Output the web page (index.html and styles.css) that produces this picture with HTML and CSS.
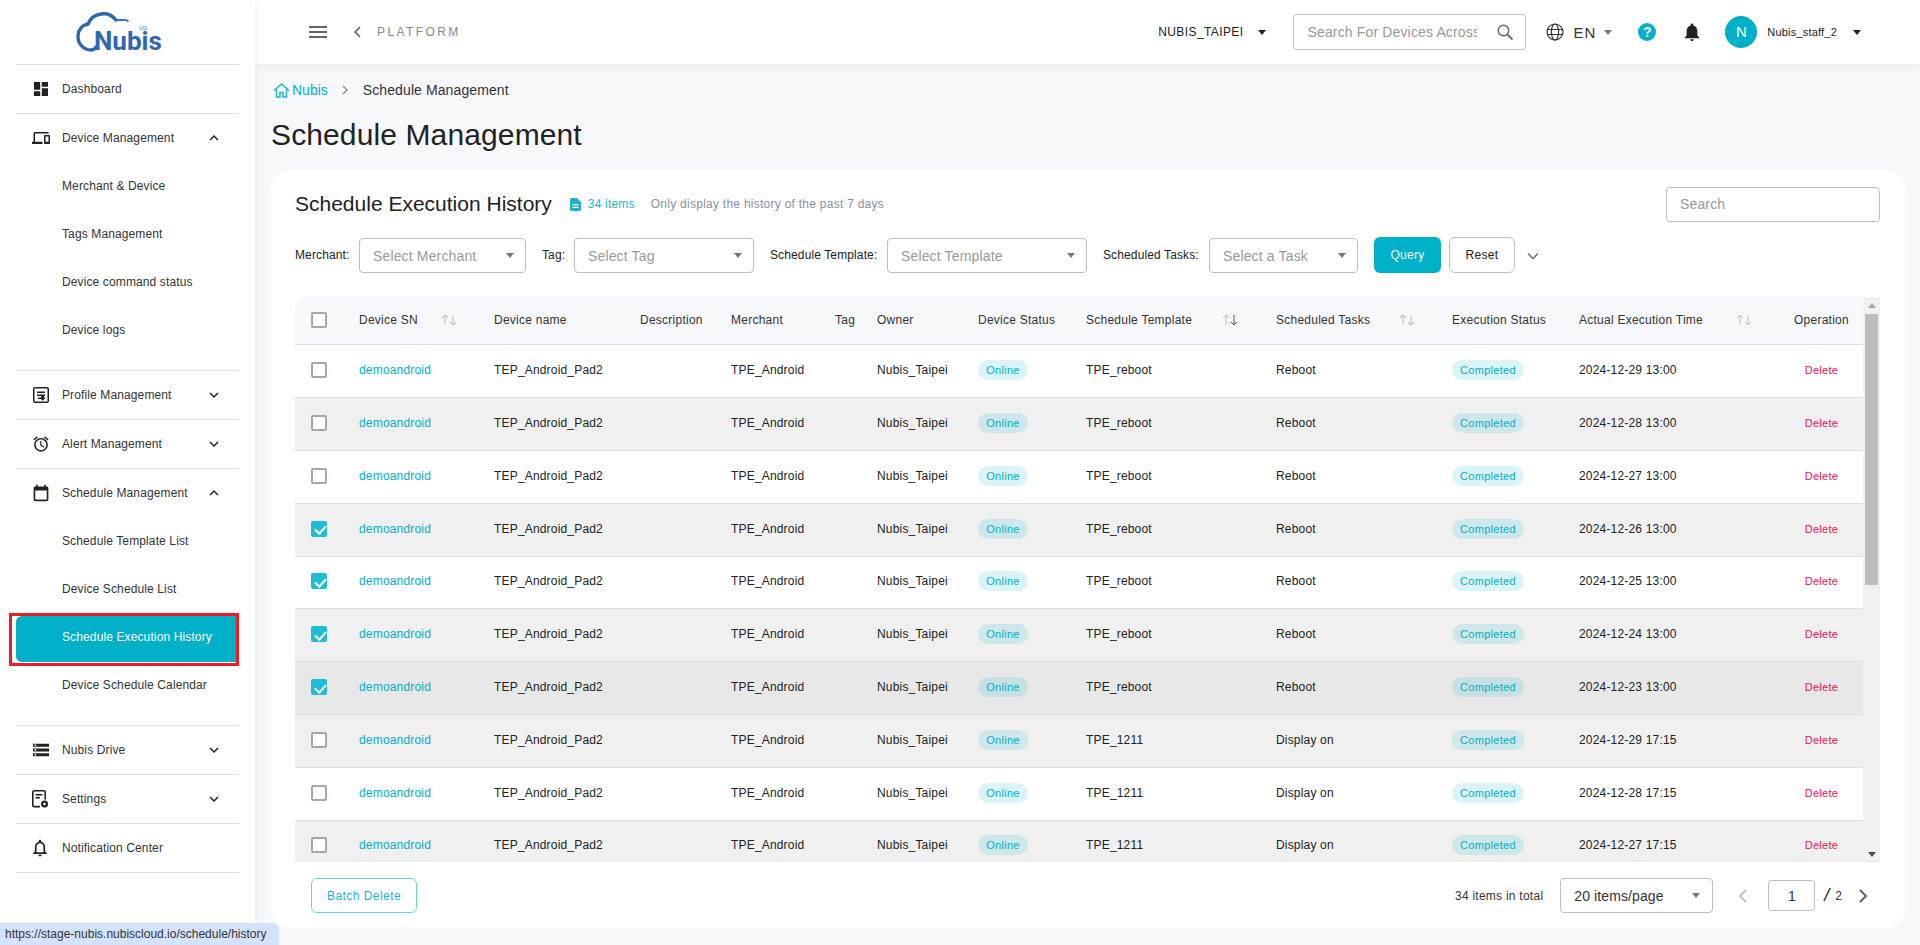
FILE: index.html
```html
<!DOCTYPE html>
<html lang="en">
<head>
<meta charset="utf-8">
<title>Schedule Management</title>
<link rel="stylesheet" href="styles.css">
</head>
<body>
<svg class="sprite" width="0" height="0">
  <symbol id="i-dash" viewBox="3 3 18 18"><path d="M3 13h8V3H3v10zm0 8h8v-6H3v6zm10 0h8V11h-8v10zm0-18v6h8V3h-8z"/></symbol>
  <symbol id="i-devices" viewBox="0 0 24 24"><path d="M4 6h18V4H4c-1.1 0-2 .9-2 2v11H0v3h14v-3H4V6zm19 2h-6c-.55 0-1 .45-1 1v10c0 .55.45 1 1 1h6c.55 0 1-.45 1-1V9c0-.55-.45-1-1-1zm-1 9h-4v-7h4v7z"/></symbol>
  <symbol id="i-profile" viewBox="0 0 16 16"><path d="M2 0h12a2 2 0 0 1 2 2v12a2 2 0 0 1-2 2H2a2 2 0 0 1-2-2V2a2 2 0 0 1 2-2zm0 1.500a.5.5 0 0 0-.5.5v12a.5.5 0 0 0 .5.5h12a.5.5 0 0 0 .5-.5V2a.5.5 0 0 0-.5-.5H2zM4 4.500h8V6H4V4.500zM4 7.500h8V9H4V7.500zM5 10.500h3.200v-.9a1.400 1.400 0 0 1 2.800 0v.9h1V12h-1a1.400 1.400 0 0 1-2.800 0H5v-1.500z"/></symbol>
  <symbol id="i-alarm" viewBox="1.500 1.500 21 21"><path d="M22 5.720l-4.600-3.860-1.290 1.530 4.600 3.860L22 5.720zM7.880 3.390L6.600 1.860 2 5.710l1.290 1.530 4.590-3.850zM12.500 8H11v6l4.750 2.850.75-1.230-4-2.370V8zM12 4c-4.970 0-9 4.030-9 9s4.030 9 9 9 9-4.030 9-9-4.030-9-9-9zm0 16c-3.870 0-7-3.130-7-7s3.130-7 7-7 7 3.130 7 7-3.130 7-7 7z"/></symbol>
  <symbol id="i-cal" viewBox="3 1 18 22"><path d="M19 4h-1V2h-2v2H8V2H6v2H5c-1.100 0-2 .9-2 2v14c0 1.100.9 2 2 2h14c1.100 0 2-.9 2-2V6c0-1.100-.9-2-2-2zm0 16H5V9h14v11z"/></symbol>
  <symbol id="i-storage" viewBox="2 4 20 16"><path d="M2 20h20v-4H2v4zm2-3h2v2H4v-2zM2 4v4h20V4H2zm4 3H4V5h2v2zm-4 7h20v-4H2v4zm2-3h2v2H4v-2z"/></symbol>
  <symbol id="i-settings" viewBox="0 0 16 18"><path d="M2 0h10a2 2 0 0 1 2 2v7.600h-1.600V2a.4.4 0 0 0-.4-.4H2a.4.4 0 0 0-.4.4v13.400c0 .2.2.4.4.4h6V17.400H2a2 2 0 0 1-2-2V2a2 2 0 0 1 2-2zM3.500 4h7v1.500h-7V4zM3.500 7h4.500v1.500H3.500V7z"/><path fill-rule="evenodd" d="M12.500 10.500a3.500 3.500 0 1 1 0 7 3.500 3.500 0 0 1 0-7zm0 2.200a1.300 1.300 0 1 0 0 2.600 1.300 1.300 0 0 0 0-2.600z"/></symbol>
  <symbol id="i-notice" viewBox="3 1.500 18 21"><path d="M12 22c1.100 0 2-.9 2-2h-4c0 1.100.9 2 2 2zm6-6v-5c0-3.070-1.630-5.640-4.500-6.320V4c0-.83-.67-1.500-1.500-1.500s-1.500.67-1.500 1.500v.68C7.640 5.360 6 7.920 6 11v5l-2 2v1h16v-1l-2-2zm-2 1H8v-6c0-2.480 1.510-4.500 4-4.500s4 2.020 4 4.500v6z"/></symbol>
  <symbol id="i-more" viewBox="0 0 24 24"><path d="M7.410 8.590L12 13.170l4.590-4.580L18 10l-6 6-6-6z"/></symbol>
  <symbol id="i-less" viewBox="0 0 24 24"><path d="M7.410 15.410L12 10.830l4.590 4.580L18 14l-6-6-6 6z"/></symbol>
  <symbol id="i-sort" viewBox="0 0 16 12"><path d="M4 1v10M1 4l3-3 3 3" fill="none" stroke="currentColor"/><path d="M12 1v10M9 8l3 3 3-3" fill="none" stroke="currentColor"/></symbol>
  <symbol id="i-sort-d" viewBox="0 0 16 12"><path d="M4 1v10M1 4l3-3 3 3" fill="none" stroke="#bdbdbd"/><path d="M12 1v10M9 8l3 3 3-3" fill="none" stroke="#555"/></symbol>
</svg>

<div class="app">
  <aside class="sidebar">
    <div class="logo">
      <svg class="logo-cloud" viewBox="0 0 60 42" width="60" height="42"><path d="M40 8C36 3 30 1 25 2 18 3 14 7 12 12 6 13 2 18 2 25 2 32 8 38 15 38 18 38 19 37 20 35" fill="none" stroke="#2e66b1" stroke-width="3.400" stroke-linecap="round"/><path d="M38 7C42 10 47 6 52 9" fill="none" stroke="#2e66b1" stroke-width="1.800" stroke-linecap="round"/></svg>
      <span class="logo-io">I/O</span>
      <span class="logo-text">Nubis</span>
    </div>
    <nav class="nav">
      <a class="nav-item"><svg class="nav-icon"><use href="#i-dash" width="14" height="14" x="2" y="2"/></svg>Dashboard</a>
      <a class="nav-item open"><svg class="nav-icon"><use href="#i-devices"/></svg>Device Management<svg class="chev"><use href="#i-less"/></svg></a>
      <div class="sub-list">
        <a class="sub-item">Merchant &amp; Device</a>
        <a class="sub-item">Tags Management</a>
        <a class="sub-item">Device command status</a>
        <a class="sub-item">Device logs</a>
      </div>
      <a class="nav-item"><svg class="nav-icon"><use href="#i-profile" width="16" height="16" x="1" y="1"/></svg>Profile Management<svg class="chev"><use href="#i-more"/></svg></a>
      <a class="nav-item"><svg class="nav-icon"><use href="#i-alarm" width="16" height="16" x="1" y="1"/></svg>Alert Management<svg class="chev"><use href="#i-more"/></svg></a>
      <a class="nav-item open"><svg class="nav-icon"><use href="#i-cal"/></svg>Schedule Management<svg class="chev"><use href="#i-less"/></svg></a>
      <div class="sub-list">
        <a class="sub-item">Schedule Template List</a>
        <a class="sub-item">Device Schedule List</a>
        <a class="sub-item active">Schedule Execution History<span class="annotation"></span></a>
        <a class="sub-item">Device Schedule Calendar</a>
      </div>
      <a class="nav-item"><svg class="nav-icon"><use href="#i-storage" width="16" height="13" x="1" y="2.500"/></svg>Nubis Drive<svg class="chev"><use href="#i-more"/></svg></a>
      <a class="nav-item"><svg class="nav-icon"><use href="#i-settings" width="16" height="18"/></svg>Settings<svg class="chev"><use href="#i-more"/></svg></a>
      <a class="nav-item"><svg class="nav-icon"><use href="#i-notice" width="16" height="18"/></svg>Notification Center</a>
    </nav>
  </aside>

  <div class="content">
    <header class="topbar">
      <svg class="burger" width="18" height="12" viewBox="0 0 18 12"><path d="M0 1h18M0 6h18M0 11h18" stroke="#666" stroke-width="2"/></svg>
      <svg class="back" width="8" height="12" viewBox="0 0 8 12"><path d="M7 1L2 6l5 5" fill="none" stroke="#777" stroke-width="1.800"/></svg>
      <span class="platform">PLATFORM</span>
      <span class="spacer"></span>
      <span class="org">NUBIS_TAIPEI</span><i class="caret dark org-caret"></i>
      <div class="global-search">
        <span class="global-ph">Search For Devices Across</span>
        <svg width="16" height="16" viewBox="0 0 16 16"><circle cx="6.500" cy="6.500" r="5.200" fill="none" stroke="#666" stroke-width="1.500"/><path d="M10.500 10.500L15.500 15.500" stroke="#666" stroke-width="1.800"/></svg>
      </div>
      <svg class="globe" width="18" height="18" viewBox="0 0 18 18"><g fill="none" stroke="#333" stroke-width="1.200"><circle cx="9" cy="9" r="8"/><ellipse cx="9" cy="9" rx="3.600" ry="8"/><path d="M1 6.500h16M1 11.500h16"/></g></svg>
      <span class="lang">EN</span><i class="caret lang-caret"></i>
      <span class="help">?</span>
      <svg class="bell" width="16" height="18" viewBox="4 2 16 20"><path d="M12 22c1.100 0 2-.9 2-2h-4c0 1.100.9 2 2 2zm6-6v-5c0-3.070-1.630-5.640-4.500-6.320V4c0-.83-.67-1.500-1.500-1.500s-1.500.67-1.500 1.500v.68C7.640 5.360 6 7.920 6 11v5l-2 2v1h16v-1l-2-2z" fill="#222"/></svg>
      <span class="avatar">N</span>
      <span class="user">Nubis_staff_2</span><i class="caret dark user-caret"></i>
    </header>

    <main class="main">
      <div class="crumbs">
        <svg class="home" width="17" height="15" viewBox="0 0 17 15"><path d="M1 7.500L8.500 1 16 7.500M3.500 6v8h3.500v-4.500h3V14h3.500V6" fill="none" stroke="#1db4cf" stroke-width="1.500"/></svg>
        <span class="crumb-link">Nubis</span>
        <svg class="crumb-sep" width="6" height="10" viewBox="0 0 6 10"><path d="M1 1l4 4-4 4" fill="none" stroke="#888" stroke-width="1.300"/></svg>
        <span class="crumb-now">Schedule Management</span>
      </div>
      <h1 class="page-title">Schedule Management</h1>

      <section class="card">
        <div class="card-head">
          <h2 class="card-title">Schedule Execution History</h2>
          <svg class="doc" width="11" height="13" viewBox="0 0 11 13"><path d="M1.500 0H7l4 4v7.500a1.500 1.500 0 0 1-1.500 1.500h-8A1.500 1.500 0 0 1 0 11.500v-10A1.500 1.500 0 0 1 1.500 0zM2.500 6v1.200h6V6zm0 2.700v1.200h6V8.700z" fill="#1db4cf" fill-rule="evenodd"/></svg>
          <span class="count">34 items</span>
          <span class="hint">Only display the history of the past 7 days</span>
          <span class="spacer"></span>
          <div class="box card-search"><span class="ph">Search</span></div>
        </div>

        <div class="filters">
          <label class="f-label l-merchant">Merchant:</label>
          <div class="box sel w-merchant"><span class="ph">Select Merchant</span><i class="caret"></i></div>
          <label class="f-label l-tag">Tag:</label>
          <div class="box sel w-tag"><span class="ph">Select Tag</span><i class="caret"></i></div>
          <label class="f-label l-template">Schedule Template:</label>
          <div class="box sel w-template"><span class="ph">Select Template</span><i class="caret"></i></div>
          <label class="f-label l-task">Scheduled Tasks:</label>
          <div class="box sel w-task"><span class="ph">Select a Task</span><i class="caret"></i></div>
          <button class="btn-query">Query</button>
          <button class="btn-reset">Reset</button>
          <svg class="filter-chev" width="12" height="8" viewBox="0 0 12 8"><path d="M1 1.500l5 5 5-5" fill="none" stroke="#666" stroke-width="1.300"/></svg>
        </div>

        <div class="table-wrap">
          <div class="table">
            <div class="row head">
              <div class="cell"><span class="check"></span></div>
              <div class="cell sorted">Device SN<svg class="sort s1"><use href="#i-sort"/></svg></div>
              <div class="cell">Device name</div>
              <div class="cell">Description</div>
              <div class="cell">Merchant</div>
              <div class="cell">Tag</div>
              <div class="cell">Owner</div>
              <div class="cell">Device Status</div>
              <div class="cell sorted">Schedule Template<svg class="sort s2"><use href="#i-sort-d"/></svg></div>
              <div class="cell sorted">Scheduled Tasks<svg class="sort s3"><use href="#i-sort"/></svg></div>
              <div class="cell">Execution Status</div>
              <div class="cell sorted">Actual Execution Time<svg class="sort s4"><use href="#i-sort"/></svg></div>
              <div class="cell center">Operation</div>
            </div>
            <div class="row"><div class="cell"><span class="check"></span></div><div class="cell link">demoandroid</div><div class="cell">TEP_Android_Pad2</div><div class="cell"></div><div class="cell">TPE_Android</div><div class="cell"></div><div class="cell">Nubis_Taipei</div><div class="cell"><span class="chip">Online</span></div><div class="cell">TPE_reboot</div><div class="cell">Reboot</div><div class="cell"><span class="chip">Completed</span></div><div class="cell">2024-12-29 13:00</div><div class="cell center del">Delete</div></div>
            <div class="row"><div class="cell"><span class="check"></span></div><div class="cell link">demoandroid</div><div class="cell">TEP_Android_Pad2</div><div class="cell"></div><div class="cell">TPE_Android</div><div class="cell"></div><div class="cell">Nubis_Taipei</div><div class="cell"><span class="chip">Online</span></div><div class="cell">TPE_reboot</div><div class="cell">Reboot</div><div class="cell"><span class="chip">Completed</span></div><div class="cell">2024-12-28 13:00</div><div class="cell center del">Delete</div></div>
            <div class="row"><div class="cell"><span class="check"></span></div><div class="cell link">demoandroid</div><div class="cell">TEP_Android_Pad2</div><div class="cell"></div><div class="cell">TPE_Android</div><div class="cell"></div><div class="cell">Nubis_Taipei</div><div class="cell"><span class="chip">Online</span></div><div class="cell">TPE_reboot</div><div class="cell">Reboot</div><div class="cell"><span class="chip">Completed</span></div><div class="cell">2024-12-27 13:00</div><div class="cell center del">Delete</div></div>
            <div class="row"><div class="cell"><span class="check on"></span></div><div class="cell link">demoandroid</div><div class="cell">TEP_Android_Pad2</div><div class="cell"></div><div class="cell">TPE_Android</div><div class="cell"></div><div class="cell">Nubis_Taipei</div><div class="cell"><span class="chip">Online</span></div><div class="cell">TPE_reboot</div><div class="cell">Reboot</div><div class="cell"><span class="chip">Completed</span></div><div class="cell">2024-12-26 13:00</div><div class="cell center del">Delete</div></div>
            <div class="row"><div class="cell"><span class="check on"></span></div><div class="cell link">demoandroid</div><div class="cell">TEP_Android_Pad2</div><div class="cell"></div><div class="cell">TPE_Android</div><div class="cell"></div><div class="cell">Nubis_Taipei</div><div class="cell"><span class="chip">Online</span></div><div class="cell">TPE_reboot</div><div class="cell">Reboot</div><div class="cell"><span class="chip">Completed</span></div><div class="cell">2024-12-25 13:00</div><div class="cell center del">Delete</div></div>
            <div class="row"><div class="cell"><span class="check on"></span></div><div class="cell link">demoandroid</div><div class="cell">TEP_Android_Pad2</div><div class="cell"></div><div class="cell">TPE_Android</div><div class="cell"></div><div class="cell">Nubis_Taipei</div><div class="cell"><span class="chip">Online</span></div><div class="cell">TPE_reboot</div><div class="cell">Reboot</div><div class="cell"><span class="chip">Completed</span></div><div class="cell">2024-12-24 13:00</div><div class="cell center del">Delete</div></div>
            <div class="row hovered"><div class="cell"><span class="check on"></span></div><div class="cell link">demoandroid</div><div class="cell">TEP_Android_Pad2</div><div class="cell"></div><div class="cell">TPE_Android</div><div class="cell"></div><div class="cell">Nubis_Taipei</div><div class="cell"><span class="chip">Online</span></div><div class="cell">TPE_reboot</div><div class="cell">Reboot</div><div class="cell"><span class="chip">Completed</span></div><div class="cell">2024-12-23 13:00</div><div class="cell center del">Delete</div></div>
            <div class="row"><div class="cell"><span class="check"></span></div><div class="cell link">demoandroid</div><div class="cell">TEP_Android_Pad2</div><div class="cell"></div><div class="cell">TPE_Android</div><div class="cell"></div><div class="cell">Nubis_Taipei</div><div class="cell"><span class="chip">Online</span></div><div class="cell">TPE_1211</div><div class="cell">Display on</div><div class="cell"><span class="chip">Completed</span></div><div class="cell">2024-12-29 17:15</div><div class="cell center del">Delete</div></div>
            <div class="row"><div class="cell"><span class="check"></span></div><div class="cell link">demoandroid</div><div class="cell">TEP_Android_Pad2</div><div class="cell"></div><div class="cell">TPE_Android</div><div class="cell"></div><div class="cell">Nubis_Taipei</div><div class="cell"><span class="chip">Online</span></div><div class="cell">TPE_1211</div><div class="cell">Display on</div><div class="cell"><span class="chip">Completed</span></div><div class="cell">2024-12-28 17:15</div><div class="cell center del">Delete</div></div>
            <div class="row"><div class="cell"><span class="check"></span></div><div class="cell link">demoandroid</div><div class="cell">TEP_Android_Pad2</div><div class="cell"></div><div class="cell">TPE_Android</div><div class="cell"></div><div class="cell">Nubis_Taipei</div><div class="cell"><span class="chip">Online</span></div><div class="cell">TPE_1211</div><div class="cell">Display on</div><div class="cell"><span class="chip">Completed</span></div><div class="cell">2024-12-27 17:15</div><div class="cell center del">Delete</div></div>
          </div>
          <div class="scrollbar">
            <i class="sb-up"></i>
            <div class="sb-thumb"></div>
            <span class="spacer"></span>
            <i class="sb-down"></i>
          </div>
        </div>

        <div class="card-foot">
          <button class="btn-batch">Batch Delete</button>
          <span class="spacer"></span>
          <span class="total">34 items in total</span>
          <div class="box sel page-size"><span class="val">20 items/page</span><i class="caret"></i></div>
          <svg class="pg prev" width="10" height="16" viewBox="0 0 10 16"><path d="M8 2L2 8l6 6" fill="none" stroke="#c4c4c4" stroke-width="2"/></svg>
          <div class="box page-no">1</div>
          <span class="slash">/</span><span class="pages">2</span>
          <svg class="pg next" width="10" height="16" viewBox="0 0 10 16"><path d="M2 2l6 6-6 6" fill="none" stroke="#666" stroke-width="2"/></svg>
        </div>
      </section>
    </main>
  </div>
</div>
<div class="statusbar">https://stage-nubis.nubiscloud.io/schedule/history</div>
</body>
</html>
```

FILE: styles.css
```css
* { box-sizing: border-box; }
html, body { margin: 0; height: 100%; overflow: hidden; }
body { font-family: "Liberation Sans", Arial, sans-serif; font-size: 12px; color: #222; background: #f7f8fc; }
.sprite { position: absolute; }
.spacer { flex: 1; }
i { display: block; }

.app { display: flex; height: 945px; }

/* sidebar */
.sidebar { width: 255px; flex: none; background: #fff; box-shadow: 2px 0 8px rgba(0,0,0,.05); position: relative; z-index: 2; padding: 0 16px; }
.logo { height: 65px; border-bottom: 1px solid #e0e0e0; position: relative; }
.logo-cloud { position: absolute; left: 60px; top: 12px; }
.logo-text { position: absolute; left: 78px; top: 31px; font: 700 26px/20px Roboto, sans-serif; color: #2e66b1; }
.logo-io { position: absolute; left: 123px; top: 24px; font: 400 6px/7px Roboto, sans-serif; color: #2e66b1; }
.nav { display: flex; flex-direction: column; }
.nav-item { height: 49px; flex: none; display: flex; align-items: center; padding-left: 16px; border-bottom: 1px solid #e0e0e0; font-size: 12px; letter-spacing: .12px; color: #333; position: relative; }
.nav-item.open { border-bottom: 0; height: 48px; }
.nav-icon { width: 18px; height: 18px; margin-right: 12px; fill: #222; flex: none; }
.chev { position: absolute; left: 189px; top: 50%; margin-top: -9px; width: 18px; height: 18px; fill: #222; }
.sub-list { border-bottom: 1px solid #e0e0e0; padding-bottom: 16px; }
.sub-item { height: 48px; display: flex; align-items: center; padding-left: 46px; font-size: 12px; letter-spacing: .12px; color: #333; position: relative; }
.sub-item.active { background: #00afc8; color: #fff; height: 46px; margin: 3px 3px -1px 0; padding-bottom: 5px; border-radius: 6px 0 0 6px; }
.annotation { position: absolute; left: -7px; right: -3px; top: -3px; bottom: -4px; border: 3px solid #ed1c24; }

/* main */
.content { flex: 1; min-width: 0; display: flex; flex-direction: column; }
.topbar { height: 64px; flex: none; background: #fff; box-shadow: 0 2px 8px rgba(0,0,0,.06); display: flex; align-items: center; padding: 0 59px 0 54px; position: relative; z-index: 1; }
.burger { margin-right: 26px; }
.back { margin-right: 16px; }
.platform { font-size: 12px; letter-spacing: 2.4px; color: #888; }
.org { font-size: 12px; letter-spacing: .4px; color: #222; }
.caret { width: 0; height: 0; border-left: 4.500px solid transparent; border-right: 4.500px solid transparent; border-top: 5px solid #777; }
.caret.dark { border-top-color: #222; }
.org-caret { margin: 0 27px 0 15px; }
.global-search { width: 233px; height: 36px; border: 1px solid #bdbdbd; border-radius: 3px; display: flex; align-items: center; justify-content: space-between; padding: 0 12px 0 13px; margin-right: 20px; }
.global-ph { font-size: 14px; letter-spacing: .15px; color: #999; width: 170px; height: 18px; line-height: 18px; overflow: hidden; white-space: nowrap; }
.globe { margin-right: 9px; }
.lang { font-size: 15px; letter-spacing: 1px; color: #333; }
.lang-caret { margin: 0 26px 0 8px; }
.help { width: 18px; height: 18px; border-radius: 50%; background: #00afc8; color: #fff; font: 700 14px/18px "Liberation Sans", sans-serif; text-align: center; margin-right: 28px; }
.bell { margin-right: 25px; }
.avatar { width: 32px; height: 32px; border-radius: 50%; background: #00afc8; color: #fff; font: 400 15px/32px "Liberation Sans", sans-serif; text-align: center; margin-right: 10px; }
.user { font-size: 11px; letter-spacing: .2px; color: #222; }
.user-caret { margin-left: 16px; }

.main { flex: 1; min-height: 0; padding: 0 15px 0 16px; }
.crumbs { height: 24px; margin-top: 14px; display: flex; align-items: center; padding-left: 2px; font-size: 14px; }
.home { margin-right: 2px; }
.crumb-link { color: #00afc8; }
.crumb-sep { margin: 0 15px 0 14px; }
.crumb-now { color: #333; letter-spacing: .1px; }
.page-title { margin: 14px 0 0; font: 400 30px/38px "Liberation Sans", sans-serif; letter-spacing: .12px; color: #222; height: 40px; }

.card { background: #fff; border-radius: 20px; margin-top: 14px; height: 759px; padding: 0 25px 0 24px; display: flex; flex-direction: column; }
.card-head { height: 68px; display: flex; align-items: center; flex: none; }
.card-title { margin: 0 18px 0 0; font: 400 21px/28px "Liberation Sans", sans-serif; color: #222; }
.doc { margin-right: 7px; }
.count { color: #1db4cf; font-size: 12px; margin-right: 16px; letter-spacing: .2px; }
.hint { color: #8a8f9c; font-size: 12px; letter-spacing: .26px; }
.box { border: 1px solid #bdbdbd; border-radius: 4px; background: #fff; display: flex; align-items: center; }
.card-search { width: 214px; height: 35px; padding-left: 13px; }
.ph { font-size: 14px; color: #999; letter-spacing: .15px; }

.filters { height: 35px; display: flex; align-items: center; flex: none; }
.f-label { font-size: 12px; letter-spacing: .12px; color: #222; white-space: nowrap; flex: none; padding-bottom: 2px; }
.l-merchant { width: 64px; }
.l-tag { width: 32px; }
.l-template { width: 117px; }
.l-task { width: 106px; }
.sel { height: 35px; padding: 0 11px 0 13px; justify-content: space-between; margin-right: 16px; flex: none; }
.w-merchant { width: 167px; }
.w-tag { width: 180px; }
.w-template { width: 200px; }
.w-task { width: 149px; margin-right: 16px; }
button { font-family: inherit; cursor: pointer; }
.btn-query { width: 67px; height: 36px; border: 0; border-radius: 6px; background: #00afc8; color: #fff; font-size: 12px; letter-spacing: .3px; margin-bottom: 1px; }
.btn-reset { width: 66px; height: 36px; margin: 0 0 1px 8px; border: 1px solid #bdbdbd; border-radius: 6px; background: #fff; color: #222; font-size: 12px; letter-spacing: .3px; }
.filter-chev { margin-left: 12px; }

.table-wrap { height: 565px; margin-top: 24px; flex: none; display: flex; overflow: hidden; }
.table { width: 1568px; flex: none; }
.row { display: grid; grid-template-columns: 48px 135px 146px 91px 104px 42px 101px 108px 190px 176px 127px 215px 85px; height: 52.800px; border-bottom: 1px solid #e0e0e0; align-items: center; font-size: 12px; letter-spacing: .18px; }
.row:nth-child(odd) { background: #f0f0f0; }
.row.head { height: 48.400px; background: #f7f8fc; border-radius: 12px 0 0 0; color: #333; letter-spacing: .25px; }
.row.hovered { background: #e8e8e8; }
.cell { padding: 0 0 2px 16px; position: relative; white-space: nowrap; }
.center { padding-left: 2px; text-align: center; }
.link { color: #00afc8; }
.del { color: #f0104f; font-size: 11px; letter-spacing: .3px; }
.sort { position: absolute; top: 1px; width: 16px; height: 12px; color: #bdbdbd; }
.s1 { left: 98px; }
.s2 { left: 152px; }
.s3 { left: 139px; }
.s4 { left: 173px; }
.check { display: block; width: 16px; height: 16px; border: 2px solid #a6a6b2; border-radius: 2px; background: #fff; position: relative; }
.check.on { background: #1fbcd6; border-color: #1fbcd6; }
.check.on::after { content: ""; position: absolute; left: 3.500px; top: .5px; width: 5px; height: 9px; border: solid #fff; border-width: 0 2px 2px 0; transform: rotate(42deg); }
.chip { display: block; height: 20px; width: 50px; text-align: center; border-radius: 10px; background: rgba(0,175,200,.14); color: #00afc8; font-size: 11px; line-height: 20px; letter-spacing: .3px; }
.cell:nth-child(11) .chip { width: 72px; }

.scrollbar { width: 17px; background: #f1f1f1; display: flex; flex-direction: column; align-items: center; padding-top: 6px; flex: none; }
.sb-up { width: 0; height: 0; border: 4.500px solid transparent; border-top: 0; border-bottom: 5px solid #a3a3a3; }
.sb-thumb { width: 13px; height: 271px; background: #bdbdbd; margin-top: 6px; }
.sb-down { width: 0; height: 0; border: 4.500px solid transparent; border-bottom: 0; border-top: 5px solid #505050; margin-bottom: 5px; }

.card-foot { height: 67px; display: flex; align-items: center; padding-left: 16px; flex: none; }
.btn-batch { width: 106px; height: 35px; background: #fff; border: 1px solid #66d3e3; border-radius: 6px; color: #1db4cf; font-size: 12px; letter-spacing: .45px; }
.total { font-size: 12px; letter-spacing: .25px; margin-right: 17px; color: #333; }
.page-size { width: 153px; margin: 0 25px 0 0; padding-right: 12px; }
.val { font-size: 14px; letter-spacing: .1px; color: #333; }
.prev { margin-right: 20px; }
.page-no { width: 47px; height: 31px; justify-content: center; font-size: 14px; color: #333; }
.slash { font-size: 18px; margin-left: 9px; color: #222; font-style: italic; }
.pages { font-size: 12px; margin-left: 6px; color: #333; }
.next { margin-left: 16px; margin-right: 12px; }

.statusbar { position: fixed; left: 0; bottom: 0; height: 22px; width: 279px; padding-left: 5px; background: #d3e3fd; border-radius: 0 6px 0 0; font: 12px/22px "Liberation Sans", sans-serif; color: #333; z-index: 5; white-space: nowrap; overflow: hidden; }
```
